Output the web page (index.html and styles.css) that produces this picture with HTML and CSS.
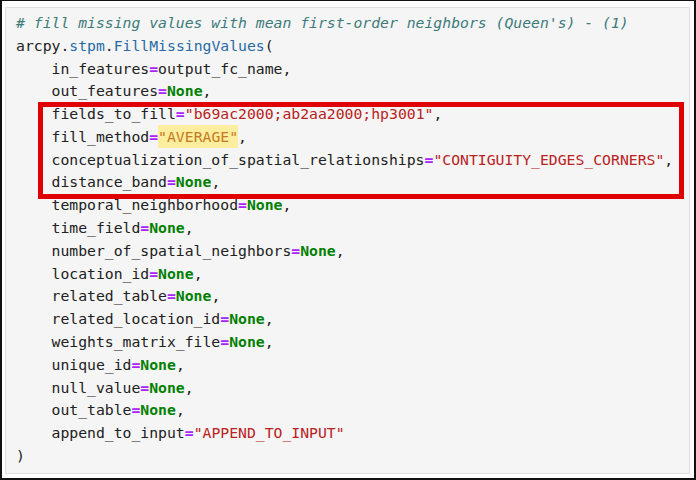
FILE: index.html
```html
<!DOCTYPE html>
<html lang="en">
<head>
    <meta charset="UTF-8">
    <meta name="viewport" content="width=device-width, initial-scale=1.0">
    <title>FillMissingValues</title>
    <link rel="stylesheet" href="styles.css">
</head>
<body>
    <div class="frame">
        <div class="cell">
            <pre class="code"><span class="c"># fill missing values with mean first-order neighbors (Queen's) - (1)</span>
arcpy.<span class="n">stpm</span>.<span class="n">FillMissingValues</span>(
    in_features<span class="o">=</span>output_fc_name,
    out_features<span class="o">=</span><span class="k">None</span>,
    fields_to_fill<span class="o">=</span><span class="s">"b69ac2000;ab2aa2000;hp3001"</span>,
    fill_method<span class="o">=</span><span class="s mark">"AVERAGE"</span>,
    conceptualization_of_spatial_relationships<span class="o">=</span><span class="s">"CONTIGUITY_EDGES_CORNERS"</span>,
    distance_band<span class="o">=</span><span class="k">None</span>,
    temporal_neighborhood<span class="o">=</span><span class="k">None</span>,
    time_field<span class="o">=</span><span class="k">None</span>,
    number_of_spatial_neighbors<span class="o">=</span><span class="k">None</span>,
    location_id<span class="o">=</span><span class="k">None</span>,
    related_table<span class="o">=</span><span class="k">None</span>,
    related_location_id<span class="o">=</span><span class="k">None</span>,
    weights_matrix_file<span class="o">=</span><span class="k">None</span>,
    unique_id<span class="o">=</span><span class="k">None</span>,
    null_value<span class="o">=</span><span class="k">None</span>,
    out_table<span class="o">=</span><span class="k">None</span>,
    append_to_input<span class="o">=</span><span class="s">"APPEND_TO_INPUT"</span>
)</pre>
            <!-- annotation box around the fill parameters -->
            <div class="callout"></div>
        </div>
    </div>
</body>
</html>
```

FILE: styles.css
```css
html, body {
    margin: 0;
    padding: 0;
    background: #ffffff;
}

.frame {
    width: 696px;
    height: 480px;
    box-sizing: border-box;
    border: 2px solid #111111;
    border-top-width: 1px;
    padding: 6px 4px 4px 3px;
    background: #ffffff;
}

.cell {
    position: relative;
    height: 100%;
    box-sizing: border-box;
    border: 1px solid #e0e0e0;
    background: #f5f5f5;
}

.code {
    margin: 0;
    padding: 4px 0 0 10px;
    font-family: "DejaVu Sans Mono", "Liberation Mono", monospace;
    font-size: 14.75px;
    line-height: 22.78px;
    color: #212121;
    white-space: pre;
}

.c {
    color: #3d7b7b;
    font-style: italic;
}

.n {
    color: #2a6aa6;
}

.o {
    color: #aa22ff;
    font-weight: bold;
}

.k {
    color: #008000;
    font-weight: bold;
}

.s {
    color: #ba2121;
}

.mark {
    color: #c47a22;
    background: #fcee9e;
    padding: 3px 0;
}

.callout {
    position: absolute;
    left: 32px;
    top: 94px;
    width: 646px;
    height: 97px;
    box-sizing: border-box;
    border: 5px solid #e00000;
}
```
